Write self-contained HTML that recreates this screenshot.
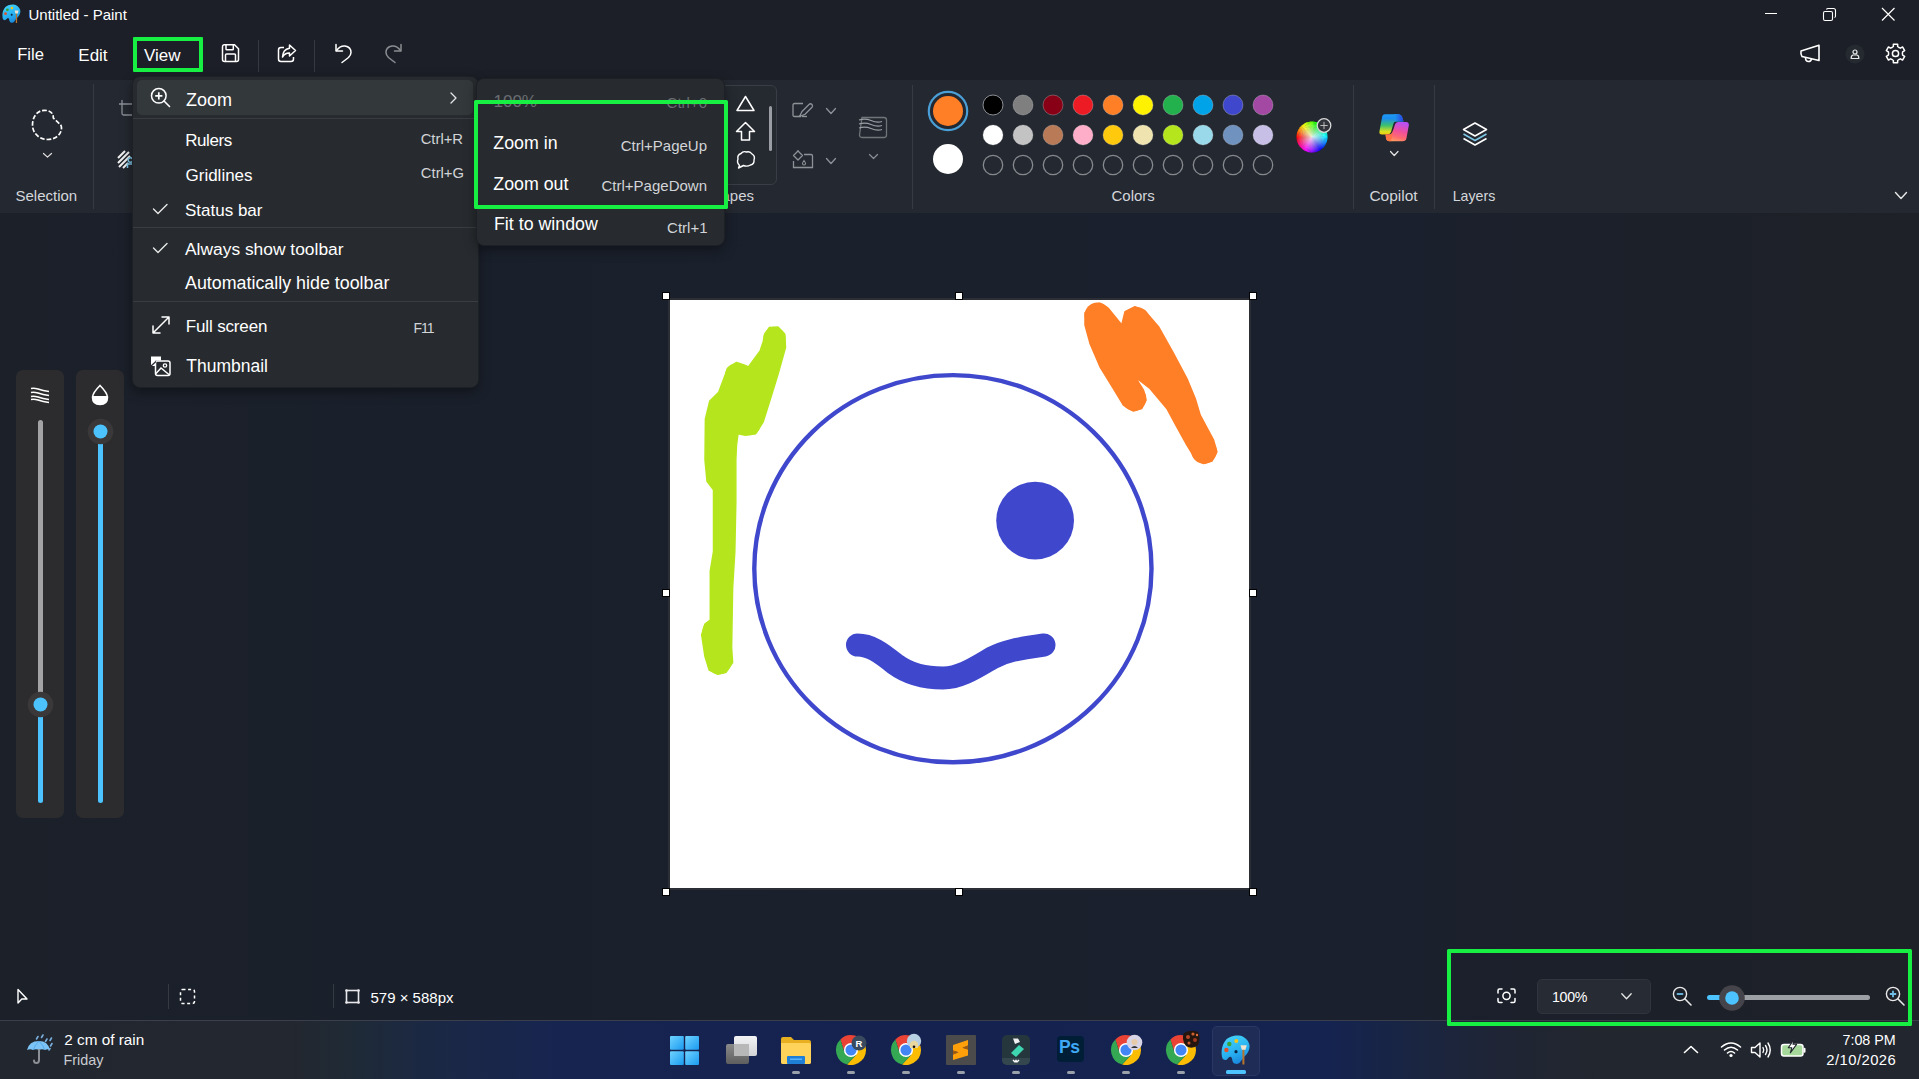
<!DOCTYPE html>
<html><head><meta charset="utf-8">
<style>
*{margin:0;padding:0;box-sizing:border-box}
html,body{width:1919px;height:1079px;overflow:hidden;background:#1b1f29;font-family:"Liberation Sans",sans-serif;color:#fff}
.a{position:absolute}
.t{position:absolute;white-space:nowrap;line-height:1}
svg{position:absolute;overflow:visible}
</style></head><body>
<div class="a" style="left:0px;top:0px;width:1919px;height:80px;background:#1c1f27;"></div>
<div class="a" style="left:0px;top:80px;width:1919px;height:133px;background:#242830;"></div>
<div class="a" style="left:0px;top:213px;width:1919px;height:807px;background:linear-gradient(90deg,#1b2029 0px,#1a202b 400px,#1a202c 900px,#1a202d 1400px,#1c2029 1650px,#1e2127 1919px);"></div>
<svg style="left:-4.7px;top:-2.6px" width="25.7" height="25.7" viewBox="0 0 40 40"><defs><linearGradient id="pgt" x1="0.2" y1="0" x2="0.6" y2="1"><stop offset="0" stop-color="#45d4fa"/><stop offset="0.6" stop-color="#28b0f0"/><stop offset="1" stop-color="#1a86dc"/></linearGradient></defs>
<path d="M15.9 15.9 C18 13.5 24 11.2 28.9 11.6 C33.5 12 38 15.5 39.3 20.2 C40.2 24 38.5 28.5 35.7 31.3 C33.5 33.5 31.5 36.5 29.9 38.6 C28.5 40.3 24.5 40.8 22.9 38 C22 36.5 22.6 34.3 21 33 C19.5 32 18 34.5 16.9 35.5 C15 37 12.5 35.5 12 33 C11.2 29 11.5 24.5 13 20.8 C13.8 18.8 14.7 17.2 15.9 15.9 Z" fill="url(#pgt)"/>
<circle cx="26.3" cy="17.1" r="2" fill="#f5c518"/><circle cx="19.3" cy="20" r="2.2" fill="#3aa335"/><circle cx="16.4" cy="26" r="2.2" fill="#e0502a"/><circle cx="26" cy="27.7" r="1.6" fill="#0b2545"/>
<rect x="32.4" y="25.5" width="2" height="15" fill="#b8742c"/><path d="M30.5 21.2 L36.8 21.2 L35.5 25.8 L31.8 25.8 Z" fill="#efe2cf"/></svg>
<div class="t" style="top:7.25px;font-size:15px;color:#ffffff;left:28.5px;">Untitled - Paint</div>
<div class="a" style="left:1765px;top:13px;width:12px;height:1px;background:#ffffff;"></div>
<svg style="left:1822px;top:7px;" width="15" height="15" viewBox="0 0 15 15"><rect x="1.5" y="4.5" width="9" height="9" rx="1.5" fill="none" stroke="#fff" stroke-width="1.1"/><path d="M4.5 2.5 Q4.8 1.5 6 1.5 L11.5 1.5 Q13.5 1.5 13.5 3.5 L13.5 9 Q13.5 10.2 12.5 10.5" fill="none" stroke="#fff" stroke-width="1.1"/></svg>
<svg style="left:1881px;top:7px;" width="15" height="15" viewBox="0 0 15 15"><path d="M1 1 L13.5 13.5 M13.5 1 L1 13.5" stroke="#fff" stroke-width="1.2"/></svg>
<div class="t" style="top:46.89px;font-size:16.6px;color:#ffffff;left:17.2px;">File</div>
<div class="t" style="top:46.75px;font-size:17px;color:#ffffff;left:78.3px;">Edit</div>
<div class="t" style="top:47.05px;font-size:17px;color:#ffffff;left:144px;">View</div>
<svg style="left:220px;top:43px;" width="21" height="21" viewBox="0 0 21 21"><path d="M2.5 4 Q2.5 1.8 4.5 1.8 L14.5 1.8 L18.5 5.8 L18.5 16.5 Q18.5 18.5 16.5 18.5 L4.5 18.5 Q2.5 18.5 2.5 16.5 Z" fill="none" stroke="#fff" stroke-width="1.5"/><path d="M6 2 L6 6 Q6 6.8 6.8 6.8 L12.5 6.8 Q13.3 6.8 13.3 6 L13.3 2" fill="none" stroke="#fff" stroke-width="1.5"/><path d="M5.5 18.3 L5.5 12 Q5.5 11 6.5 11 L14.5 11 Q15.5 11 15.5 12 L15.5 18.3" fill="none" stroke="#fff" stroke-width="1.5"/></svg>
<div class="a" style="left:258px;top:40px;width:1px;height:32px;background:#353943;"></div>
<svg style="left:276px;top:43px;" width="22" height="21" viewBox="0 0 22 21"><path d="M8 4.5 L5 4.5 Q2.5 4.5 2.5 7 L2.5 16 Q2.5 18.5 5 18.5 L15 18.5 Q17.5 18.5 17.5 16 L17.5 14" fill="none" stroke="#fff" stroke-width="1.5"/><path d="M13.5 2 L19.5 7.5 L13.5 13 L13.5 10 Q9 9.8 6.5 14 Q6.8 6.5 13.5 5.2 Z" fill="none" stroke="#fff" stroke-width="1.5" stroke-linejoin="round"/></svg>
<div class="a" style="left:314px;top:40px;width:1px;height:32px;background:#353943;"></div>
<svg style="left:333px;top:42px;" width="22" height="22" viewBox="0 0 22 22"><path d="M3 2.5 L3 9 L9.5 9" fill="none" stroke="#fff" stroke-width="1.5" stroke-linecap="round" stroke-linejoin="round"/><path d="M3.5 8.5 Q7 3.5 12 4 Q18 5 18 10.5 Q18 13 15.5 15.5 L9 20.5" fill="none" stroke="#fff" stroke-width="1.5" stroke-linecap="round"/></svg>
<svg style="left:382px;top:42px;" width="22" height="22" viewBox="0 0 22 22"><path d="M19 2.5 L19 9 L12.5 9" fill="none" stroke="#8a8d93" stroke-width="1.5" stroke-linecap="round" stroke-linejoin="round"/><path d="M18.5 8.5 Q15 3.5 10 4 Q4 5 4 10.5 Q4 13 6.5 15.5 L13 20.5" fill="none" stroke="#8a8d93" stroke-width="1.5" stroke-linecap="round"/></svg>
<svg style="left:1799px;top:44px;" width="23" height="20" viewBox="0 0 23 20"><path d="M2 7 Q1.5 10.5 3 12.5 L20 16.5 L20 1.2 Z" fill="none" stroke="#fff" stroke-width="1.6" stroke-linejoin="round"/><path d="M6.5 13.5 Q6.5 17.5 9.5 17.5 Q12 17.5 12.5 14.8" fill="none" stroke="#fff" stroke-width="1.6"/></svg>
<svg style="left:1845px;top:44px;" width="20" height="20" viewBox="0 0 20 20"><circle cx="10" cy="10" r="9.5" fill="#252a31"/><circle cx="10" cy="8" r="2" fill="none" stroke="#e8e8e8" stroke-width="1.2"/><path d="M6.2 14.5 Q6 11.5 8 11 L12 11 Q14 11.5 13.8 14.5 Z" fill="none" stroke="#e8e8e8" stroke-width="1.2"/></svg>
<svg style="left:1884.6px;top:42.6px;" width="21" height="21" viewBox="0 0 21 21"><path d="M7.05 4.52 L8.37 3.52 L8.34 1.15 L12.66 1.15 L12.63 3.52 L13.95 4.52 L15.48 5.16 L17.52 3.95 L19.68 7.69 L17.61 8.86 L17.40 10.50 L17.61 12.14 L19.68 13.31 L17.52 17.05 L15.48 15.84 L13.95 16.48 L12.63 17.48 L12.66 19.85 L8.34 19.85 L8.37 17.48 L7.05 16.48 L5.52 15.84 L3.48 17.05 L1.32 13.31 L3.39 12.14 L3.60 10.50 L3.39 8.86 L1.32 7.69 L3.48 3.95 L5.52 5.16 Z" fill="none" stroke="#fff" stroke-width="1.5" stroke-linejoin="round"/><circle cx="10.5" cy="10.5" r="3.1" fill="none" stroke="#fff" stroke-width="1.5"/></svg>
<svg style="left:25px;top:102px;" width="45" height="45" viewBox="0 0 45 45"><path d="M28.3 16 C28.5 11 25 8.3 19.5 8.3 C12 8.3 7.5 15 7.5 23 C7.5 31 14 37.5 22.5 37.5 C31 37.5 36.5 32 36.5 26 C36.5 24.5 36 23 35 22.2 Z" fill="none" stroke="#fff" stroke-width="1.7" stroke-dasharray="4.6 1.9" stroke-dashoffset="2"/></svg>
<svg style="left:42.5px;top:152.8px;" width="9" height="4.6" viewBox="0 0 9 4.6"><path d="M0.5 0.5 L4.5 4.1 L8.5 0.5" fill="none" stroke="#e0e0e0" stroke-width="1.2" stroke-linecap="round" stroke-linejoin="round"/></svg>
<div class="t" style="top:188.25px;font-size:15px;color:#d3d6db;left:15.5px;">Selection</div>
<div class="a" style="left:93px;top:84px;width:1px;height:125px;background:#363a42;"></div>
<svg style="left:118px;top:99px;" width="16" height="18" viewBox="0 0 16 18"><path d="M4 1 L4 14.5 Q4 16 5.5 16 L16 16 M1 5 L16 5" fill="none" stroke="#8c9096" stroke-width="1.3"/></svg>
<svg style="left:116px;top:149px;" width="18" height="21" viewBox="0 0 18 21"><path d="M2 9 L9 2 M2 14 L13 3 M3 18 L14 7 M7 19 L12 14" stroke="#f0f0f0" stroke-width="2"/><circle cx="14.5" cy="11" r="2.3" fill="none" stroke="#7ec8e8" stroke-width="1.5"/><path d="M11.5 19 L11.5 15 L17 15" fill="none" stroke="#7ec8e8" stroke-width="1.5"/></svg>
<div class="a" style="left:600px;top:85px;width:177px;height:100px;border:1px solid #393d45;border-radius:6px;background:#252a31"></div>
<svg style="left:736px;top:95px;" width="19" height="17" viewBox="0 0 19 17"><path d="M9.5 1.5 L18 15.5 L1 15.5 Z" fill="none" stroke="#fff" stroke-width="1.5" stroke-linejoin="round"/></svg>
<svg style="left:735px;top:121px;" width="21" height="21" viewBox="0 0 21 21"><path d="M10.5 1.5 L19.5 10.5 L14.5 10.5 L14.5 19 L6.5 19 L6.5 10.5 L1.5 10.5 Z" fill="none" stroke="#fff" stroke-width="1.5" stroke-linejoin="round"/></svg>
<svg style="left:736px;top:150px;" width="20" height="20" viewBox="0 0 20 20"><path d="M3.5 15.5 Q0.5 12.5 2 9 Q1 5 5 3.5 Q7 0.8 10.5 2 Q14 0.8 16 4 Q19.5 6 18 10 Q18.5 14 14.5 15 Q11 17 7.5 15.5 L2.5 18 Z" fill="none" stroke="#fff" stroke-width="1.4" stroke-linejoin="round"/></svg>
<div class="a" style="left:768.5px;top:106px;width:3px;height:45px;background:#9a9ea4;border-radius:2px;"></div>
<div class="t" style="top:188.25px;font-size:15px;color:#d3d6db;right:1165px;">Shapes</div>
<svg style="left:792px;top:102px;" width="22" height="17" viewBox="0 0 22 17"><path d="M9 14.5 L2.5 14.5 Q1 14.5 1 13 L1 3 Q1 1.5 2.5 1.5 L11 1.5" fill="none" stroke="#8e9298" stroke-width="1.3"/><path d="M7.5 14.5 L10 9.5 L17 2.5 Q18.5 1 20 2.5 Q21.2 4 20 5.3 L13 12.3 Z" fill="none" stroke="#8e9298" stroke-width="1.3" stroke-linejoin="round"/><path d="M10 14.5 L15 14.5" stroke="#8e9298" stroke-width="1.3"/></svg>
<svg style="left:826px;top:107.5px;" width="10" height="6" viewBox="0 0 10 6"><path d="M0.5 0.5 L5.0 5.5 L9.5 0.5" fill="none" stroke="#8e9298" stroke-width="1.3" stroke-linecap="round" stroke-linejoin="round"/></svg>
<svg style="left:792px;top:149px;" width="22" height="20" viewBox="0 0 22 20"><path d="M12 5.5 L19 5.5 Q20.5 5.5 20.5 7 L20.5 18.5 L1.5 18.5 L1.5 12" fill="none" stroke="#8e9298" stroke-width="1.3"/><path d="M6 2 L10.5 6.5 L6 11 L1.5 6.5 Z M6 1 L6 3" fill="none" stroke="#8e9298" stroke-width="1.3" stroke-linejoin="round"/><path d="M12 11.5 Q10.5 13.5 10.5 14.5 Q10.5 16 12 16 Q13.5 16 13.5 14.5 Q13.5 13.5 12 11.5 Z" fill="none" stroke="#8e9298" stroke-width="1.1"/></svg>
<svg style="left:826px;top:157.5px;" width="10" height="6" viewBox="0 0 10 6"><path d="M0.5 0.5 L5.0 5.5 L9.5 0.5" fill="none" stroke="#8e9298" stroke-width="1.3" stroke-linecap="round" stroke-linejoin="round"/></svg>
<svg style="left:857px;top:114px;" width="32" height="26" viewBox="0 0 32 26"><path d="M5 3.5 L27 3.5 Q29.5 3.5 29.5 6 L29.5 21 Q29.5 23.5 27 23.5 L5 23.5 Q2.5 23.5 2.5 21 Z" fill="none" stroke="#6f737a" stroke-width="1.3"/><path d="M2 6 Q8 4 14 6.5 Q20 9 25 7.5 M2 10 Q8 8 14 10.5 Q20 13 25 11.5 M2 14 Q8 12 14 14.5 Q20 17 25 15.5" fill="none" stroke="#9a9ea4" stroke-width="1.3"/></svg>
<svg style="left:868.5px;top:154px;" width="9" height="5" viewBox="0 0 9 5"><path d="M0.5 0.5 L4.5 4.5 L8.5 0.5" fill="none" stroke="#8a8e94" stroke-width="1.2" stroke-linecap="round" stroke-linejoin="round"/></svg>
<div class="a" style="left:912px;top:85px;width:1px;height:124px;background:#363a42;"></div>
<svg style="left:927px;top:90px;" width="42" height="42" viewBox="0 0 42 42"><circle cx="21" cy="21" r="19.2" fill="none" stroke="#4a9fd6" stroke-width="2.2"/><circle cx="21" cy="21" r="15" fill="#ff7f27"/></svg>
<svg style="left:932px;top:143px;" width="32" height="32" viewBox="0 0 32 32"><circle cx="16" cy="16" r="15" fill="#ffffff"/></svg>
<svg style="left:982px;top:94px;" width="22" height="22" viewBox="0 0 22 22"><circle cx="11" cy="11" r="10" fill="#000000" stroke="#8a8d92" stroke-width="1"/></svg>
<svg style="left:982px;top:124px;" width="22" height="22" viewBox="0 0 22 22"><circle cx="11" cy="11" r="10" fill="#ffffff" stroke="rgba(255,255,255,0.2)" stroke-width="1"/></svg>
<svg style="left:982px;top:154px;" width="22" height="22" viewBox="0 0 22 22"><circle cx="11" cy="11" r="9.7" fill="none" stroke="#85888d" stroke-width="1.3"/></svg>
<svg style="left:1012px;top:94px;" width="22" height="22" viewBox="0 0 22 22"><circle cx="11" cy="11" r="10" fill="#7f7f7f" stroke="rgba(255,255,255,0.25)" stroke-width="1"/></svg>
<svg style="left:1012px;top:124px;" width="22" height="22" viewBox="0 0 22 22"><circle cx="11" cy="11" r="10" fill="#c3c3c3" stroke="rgba(255,255,255,0.2)" stroke-width="1"/></svg>
<svg style="left:1012px;top:154px;" width="22" height="22" viewBox="0 0 22 22"><circle cx="11" cy="11" r="9.7" fill="none" stroke="#85888d" stroke-width="1.3"/></svg>
<svg style="left:1042px;top:94px;" width="22" height="22" viewBox="0 0 22 22"><circle cx="11" cy="11" r="10" fill="#880015" stroke="rgba(255,255,255,0.25)" stroke-width="1"/></svg>
<svg style="left:1042px;top:124px;" width="22" height="22" viewBox="0 0 22 22"><circle cx="11" cy="11" r="10" fill="#b97a57" stroke="rgba(255,255,255,0.2)" stroke-width="1"/></svg>
<svg style="left:1042px;top:154px;" width="22" height="22" viewBox="0 0 22 22"><circle cx="11" cy="11" r="9.7" fill="none" stroke="#85888d" stroke-width="1.3"/></svg>
<svg style="left:1072px;top:94px;" width="22" height="22" viewBox="0 0 22 22"><circle cx="11" cy="11" r="10" fill="#ed1c24" stroke="rgba(255,255,255,0.25)" stroke-width="1"/></svg>
<svg style="left:1072px;top:124px;" width="22" height="22" viewBox="0 0 22 22"><circle cx="11" cy="11" r="10" fill="#ffaec9" stroke="rgba(255,255,255,0.2)" stroke-width="1"/></svg>
<svg style="left:1072px;top:154px;" width="22" height="22" viewBox="0 0 22 22"><circle cx="11" cy="11" r="9.7" fill="none" stroke="#85888d" stroke-width="1.3"/></svg>
<svg style="left:1102px;top:94px;" width="22" height="22" viewBox="0 0 22 22"><circle cx="11" cy="11" r="10" fill="#ff7f27" stroke="rgba(255,255,255,0.25)" stroke-width="1"/></svg>
<svg style="left:1102px;top:124px;" width="22" height="22" viewBox="0 0 22 22"><circle cx="11" cy="11" r="10" fill="#ffc90e" stroke="rgba(255,255,255,0.2)" stroke-width="1"/></svg>
<svg style="left:1102px;top:154px;" width="22" height="22" viewBox="0 0 22 22"><circle cx="11" cy="11" r="9.7" fill="none" stroke="#85888d" stroke-width="1.3"/></svg>
<svg style="left:1132px;top:94px;" width="22" height="22" viewBox="0 0 22 22"><circle cx="11" cy="11" r="10" fill="#fff200" stroke="rgba(255,255,255,0.25)" stroke-width="1"/></svg>
<svg style="left:1132px;top:124px;" width="22" height="22" viewBox="0 0 22 22"><circle cx="11" cy="11" r="10" fill="#efe4b0" stroke="rgba(255,255,255,0.2)" stroke-width="1"/></svg>
<svg style="left:1132px;top:154px;" width="22" height="22" viewBox="0 0 22 22"><circle cx="11" cy="11" r="9.7" fill="none" stroke="#85888d" stroke-width="1.3"/></svg>
<svg style="left:1162px;top:94px;" width="22" height="22" viewBox="0 0 22 22"><circle cx="11" cy="11" r="10" fill="#22b14c" stroke="rgba(255,255,255,0.25)" stroke-width="1"/></svg>
<svg style="left:1162px;top:124px;" width="22" height="22" viewBox="0 0 22 22"><circle cx="11" cy="11" r="10" fill="#b5e61d" stroke="rgba(255,255,255,0.2)" stroke-width="1"/></svg>
<svg style="left:1162px;top:154px;" width="22" height="22" viewBox="0 0 22 22"><circle cx="11" cy="11" r="9.7" fill="none" stroke="#85888d" stroke-width="1.3"/></svg>
<svg style="left:1192px;top:94px;" width="22" height="22" viewBox="0 0 22 22"><circle cx="11" cy="11" r="10" fill="#00a2e8" stroke="rgba(255,255,255,0.25)" stroke-width="1"/></svg>
<svg style="left:1192px;top:124px;" width="22" height="22" viewBox="0 0 22 22"><circle cx="11" cy="11" r="10" fill="#99d9ea" stroke="rgba(255,255,255,0.2)" stroke-width="1"/></svg>
<svg style="left:1192px;top:154px;" width="22" height="22" viewBox="0 0 22 22"><circle cx="11" cy="11" r="9.7" fill="none" stroke="#85888d" stroke-width="1.3"/></svg>
<svg style="left:1222px;top:94px;" width="22" height="22" viewBox="0 0 22 22"><circle cx="11" cy="11" r="10" fill="#3f48cc" stroke="rgba(255,255,255,0.25)" stroke-width="1"/></svg>
<svg style="left:1222px;top:124px;" width="22" height="22" viewBox="0 0 22 22"><circle cx="11" cy="11" r="10" fill="#7092be" stroke="rgba(255,255,255,0.2)" stroke-width="1"/></svg>
<svg style="left:1222px;top:154px;" width="22" height="22" viewBox="0 0 22 22"><circle cx="11" cy="11" r="9.7" fill="none" stroke="#85888d" stroke-width="1.3"/></svg>
<svg style="left:1252px;top:94px;" width="22" height="22" viewBox="0 0 22 22"><circle cx="11" cy="11" r="10" fill="#a349a4" stroke="rgba(255,255,255,0.25)" stroke-width="1"/></svg>
<svg style="left:1252px;top:124px;" width="22" height="22" viewBox="0 0 22 22"><circle cx="11" cy="11" r="10" fill="#c8bfe7" stroke="rgba(255,255,255,0.2)" stroke-width="1"/></svg>
<svg style="left:1252px;top:154px;" width="22" height="22" viewBox="0 0 22 22"><circle cx="11" cy="11" r="9.7" fill="none" stroke="#85888d" stroke-width="1.3"/></svg>
<svg style="left:1296px;top:120px;" width="34" height="34" viewBox="0 0 34 34"><defs><radialGradient id="wh" cx="0.5" cy="0.5" r="0.5"><stop offset="0" stop-color="#fff"/><stop offset="1" stop-color="#fff" stop-opacity="0"/></radialGradient></defs>
<path d="M16 17 L16.00 1.50 A15.5 15.5 0 0 1 17.57 1.58 Z" fill="#4aff00"/><path d="M16 17 L17.35 1.56 A15.5 15.5 0 0 1 18.90 1.77 Z" fill="#36ff00"/><path d="M16 17 L18.69 1.74 A15.5 15.5 0 0 1 20.22 2.09 Z" fill="#21ff00"/><path d="M16 17 L20.01 2.03 A15.5 15.5 0 0 1 21.50 2.51 Z" fill="#0dff00"/><path d="M16 17 L21.30 2.43 A15.5 15.5 0 0 1 22.75 3.05 Z" fill="#00ff07"/><path d="M16 17 L22.55 2.95 A15.5 15.5 0 0 1 23.94 3.69 Z" fill="#00ff1b"/><path d="M16 17 L23.75 3.58 A15.5 15.5 0 0 1 25.07 4.43 Z" fill="#00ff30"/><path d="M16 17 L24.89 4.30 A15.5 15.5 0 0 1 26.13 5.27 Z" fill="#00ff44"/><path d="M16 17 L25.96 5.13 A15.5 15.5 0 0 1 27.11 6.19 Z" fill="#00ff58"/><path d="M16 17 L26.96 6.04 A15.5 15.5 0 0 1 28.01 7.20 Z" fill="#00ff6d"/><path d="M16 17 L27.87 7.04 A15.5 15.5 0 0 1 28.82 8.29 Z" fill="#00ff81"/><path d="M16 17 L28.70 8.11 A15.5 15.5 0 0 1 29.53 9.44 Z" fill="#00ff96"/><path d="M16 17 L29.42 9.25 A15.5 15.5 0 0 1 30.14 10.65 Z" fill="#00ffaa"/><path d="M16 17 L30.05 10.45 A15.5 15.5 0 0 1 30.64 11.90 Z" fill="#00ffbf"/><path d="M16 17 L30.57 11.70 A15.5 15.5 0 0 1 31.03 13.20 Z" fill="#00ffd3"/><path d="M16 17 L30.97 12.99 A15.5 15.5 0 0 1 31.30 14.52 Z" fill="#00ffe8"/><path d="M16 17 L31.26 14.31 A15.5 15.5 0 0 1 31.46 15.86 Z" fill="#00fffc"/><path d="M16 17 L31.44 15.65 A15.5 15.5 0 0 1 31.50 17.22 Z" fill="#00ecff"/><path d="M16 17 L31.50 17.00 A15.5 15.5 0 0 1 31.42 18.57 Z" fill="#00d8ff"/><path d="M16 17 L31.44 18.35 A15.5 15.5 0 0 1 31.23 19.90 Z" fill="#00c3ff"/><path d="M16 17 L31.26 19.69 A15.5 15.5 0 0 1 30.91 21.22 Z" fill="#00afff"/><path d="M16 17 L30.97 21.01 A15.5 15.5 0 0 1 30.49 22.50 Z" fill="#009bff"/><path d="M16 17 L30.57 22.30 A15.5 15.5 0 0 1 29.95 23.75 Z" fill="#0086ff"/><path d="M16 17 L30.05 23.55 A15.5 15.5 0 0 1 29.31 24.94 Z" fill="#0072ff"/><path d="M16 17 L29.42 24.75 A15.5 15.5 0 0 1 28.57 26.07 Z" fill="#005dff"/><path d="M16 17 L28.70 25.89 A15.5 15.5 0 0 1 27.73 27.13 Z" fill="#0049ff"/><path d="M16 17 L27.87 26.96 A15.5 15.5 0 0 1 26.81 28.11 Z" fill="#0034ff"/><path d="M16 17 L26.96 27.96 A15.5 15.5 0 0 1 25.80 29.01 Z" fill="#0020ff"/><path d="M16 17 L25.96 28.87 A15.5 15.5 0 0 1 24.71 29.82 Z" fill="#000bff"/><path d="M16 17 L24.89 29.70 A15.5 15.5 0 0 1 23.56 30.53 Z" fill="#0800ff"/><path d="M16 17 L23.75 30.42 A15.5 15.5 0 0 1 22.35 31.14 Z" fill="#1d00ff"/><path d="M16 17 L22.55 31.05 A15.5 15.5 0 0 1 21.10 31.64 Z" fill="#3100ff"/><path d="M16 17 L21.30 31.57 A15.5 15.5 0 0 1 19.80 32.03 Z" fill="#4600ff"/><path d="M16 17 L20.01 31.97 A15.5 15.5 0 0 1 18.48 32.30 Z" fill="#5a00ff"/><path d="M16 17 L18.69 32.26 A15.5 15.5 0 0 1 17.14 32.46 Z" fill="#6e00ff"/><path d="M16 17 L17.35 32.44 A15.5 15.5 0 0 1 15.78 32.50 Z" fill="#8300ff"/><path d="M16 17 L16.00 32.50 A15.5 15.5 0 0 1 14.43 32.42 Z" fill="#9700ff"/><path d="M16 17 L14.65 32.44 A15.5 15.5 0 0 1 13.10 32.23 Z" fill="#ac00ff"/><path d="M16 17 L13.31 32.26 A15.5 15.5 0 0 1 11.78 31.91 Z" fill="#c000ff"/><path d="M16 17 L11.99 31.97 A15.5 15.5 0 0 1 10.50 31.49 Z" fill="#d500ff"/><path d="M16 17 L10.70 31.57 A15.5 15.5 0 0 1 9.25 30.95 Z" fill="#e900ff"/><path d="M16 17 L9.45 31.05 A15.5 15.5 0 0 1 8.06 30.31 Z" fill="#fe00ff"/><path d="M16 17 L8.25 30.42 A15.5 15.5 0 0 1 6.93 29.57 Z" fill="#ff00eb"/><path d="M16 17 L7.11 29.70 A15.5 15.5 0 0 1 5.87 28.73 Z" fill="#ff00d6"/><path d="M16 17 L6.04 28.87 A15.5 15.5 0 0 1 4.89 27.81 Z" fill="#ff00c2"/><path d="M16 17 L5.04 27.96 A15.5 15.5 0 0 1 3.99 26.80 Z" fill="#ff00ad"/><path d="M16 17 L4.13 26.96 A15.5 15.5 0 0 1 3.18 25.71 Z" fill="#ff0099"/><path d="M16 17 L3.30 25.89 A15.5 15.5 0 0 1 2.47 24.56 Z" fill="#ff0085"/><path d="M16 17 L2.58 24.75 A15.5 15.5 0 0 1 1.86 23.35 Z" fill="#ff0070"/><path d="M16 17 L1.95 23.55 A15.5 15.5 0 0 1 1.36 22.10 Z" fill="#ff005c"/><path d="M16 17 L1.43 22.30 A15.5 15.5 0 0 1 0.97 20.80 Z" fill="#ff0047"/><path d="M16 17 L1.03 21.01 A15.5 15.5 0 0 1 0.70 19.48 Z" fill="#ff0033"/><path d="M16 17 L0.74 19.69 A15.5 15.5 0 0 1 0.54 18.14 Z" fill="#ff001e"/><path d="M16 17 L0.56 18.35 A15.5 15.5 0 0 1 0.50 16.78 Z" fill="#ff000a"/><path d="M16 17 L0.50 17.00 A15.5 15.5 0 0 1 0.58 15.43 Z" fill="#ff0b00"/><path d="M16 17 L0.56 15.65 A15.5 15.5 0 0 1 0.77 14.10 Z" fill="#ff2300"/><path d="M16 17 L0.74 14.31 A15.5 15.5 0 0 1 1.09 12.78 Z" fill="#ff3b00"/><path d="M16 17 L1.03 12.99 A15.5 15.5 0 0 1 1.51 11.50 Z" fill="#ff5200"/><path d="M16 17 L1.43 11.70 A15.5 15.5 0 0 1 2.05 10.25 Z" fill="#ff6a00"/><path d="M16 17 L1.95 10.45 A15.5 15.5 0 0 1 2.69 9.06 Z" fill="#ff8100"/><path d="M16 17 L2.58 9.25 A15.5 15.5 0 0 1 3.43 7.93 Z" fill="#ff9900"/><path d="M16 17 L3.30 8.11 A15.5 15.5 0 0 1 4.27 6.87 Z" fill="#ffb100"/><path d="M16 17 L4.13 7.04 A15.5 15.5 0 0 1 5.19 5.89 Z" fill="#ffc800"/><path d="M16 17 L5.04 6.04 A15.5 15.5 0 0 1 6.20 4.99 Z" fill="#ffe000"/><path d="M16 17 L6.04 5.13 A15.5 15.5 0 0 1 7.29 4.18 Z" fill="#fff700"/><path d="M16 17 L7.11 4.30 A15.5 15.5 0 0 1 8.44 3.47 Z" fill="#eeff00"/><path d="M16 17 L8.25 3.58 A15.5 15.5 0 0 1 9.65 2.86 Z" fill="#d6ff00"/><path d="M16 17 L9.45 2.95 A15.5 15.5 0 0 1 10.90 2.36 Z" fill="#bfff00"/><path d="M16 17 L10.70 2.43 A15.5 15.5 0 0 1 12.20 1.97 Z" fill="#a7ff00"/><path d="M16 17 L11.99 2.03 A15.5 15.5 0 0 1 13.52 1.70 Z" fill="#90ff00"/><path d="M16 17 L13.31 1.74 A15.5 15.5 0 0 1 14.86 1.54 Z" fill="#78ff00"/><path d="M16 17 L14.65 1.56 A15.5 15.5 0 0 1 16.22 1.50 Z" fill="#60ff00"/>
<circle cx="16" cy="17" r="15.5" fill="url(#wh)" opacity="0.85"/>
<circle cx="28" cy="5.5" r="6.8" fill="#30333a" stroke="#d8d8d8" stroke-width="1.3"/><path d="M28 1.8 L28 9.2 M24.3 5.5 L31.7 5.5" stroke="#c8c8c8" stroke-width="0.9"/></svg>
<div class="t" style="top:188.25px;font-size:15px;color:#d3d6db;left:1111.5px;">Colors</div>
<div class="a" style="left:1353px;top:85px;width:1px;height:124px;background:#363a42;"></div>
<svg style="left:1374px;top:108px;" width="40" height="40" viewBox="0 0 40 40"><defs>
<linearGradient id="cp1" x1="0" y1="0" x2="0" y2="1"><stop offset="0" stop-color="#1e9cf5"/><stop offset="0.2" stop-color="#1a8cf0"/><stop offset="0.55" stop-color="#3cc070"/><stop offset="0.85" stop-color="#d8e020"/><stop offset="1" stop-color="#f0d010"/></linearGradient>
<linearGradient id="cp2" x1="0.6" y1="0" x2="0.3" y2="1"><stop offset="0" stop-color="#b850f5"/><stop offset="0.45" stop-color="#f0509a"/><stop offset="0.75" stop-color="#ff6a70"/><stop offset="1" stop-color="#ffa060"/></linearGradient>
<linearGradient id="cp3" x1="0" y1="0" x2="1" y2="0"><stop offset="0" stop-color="#1a9cf0"/><stop offset="1" stop-color="#2a40e0"/></linearGradient></defs>
<path d="M11 6.3 L24 6.3 Q27.5 6.3 28.5 10 L29.5 13.5 L22 13.5 Q20 13.5 19.5 15.5 L17 24 Q16 26.5 13 26.5 L8 26.5 Q4.8 26.5 5.5 23 L8 9.5 Q8.5 6.3 11 6.3 Z" fill="url(#cp1)"/>
<path d="M20 6.3 L24 6.3 Q27.5 6.3 28.5 10 L29.5 13.5 L21 13.5 Z" fill="url(#cp3)"/>
<path d="M24 14 L32 14 Q35.3 14 34.8 17.5 L32.5 30 Q32 33.3 28.5 33.3 L15.5 33.3 Q12.5 33.3 12 30 L11.5 26.5 L15 26.5 Q17.5 26.5 18.5 24 L21 16.5 Q21.8 14 24 14 Z" fill="url(#cp2)"/>
<path d="M11.5 26.5 L15 26.5 Q17.5 26.5 18.5 24 L19.5 21 L17 33.3 L15.5 33.3 Q12.5 33.3 12 30 Z" fill="#ff7040" opacity="0.85"/></svg>
<svg style="left:1389.5px;top:150.5px;" width="8.5" height="5" viewBox="0 0 8.5 5"><path d="M0.5 0.5 L4.25 4.5 L8.0 0.5" fill="none" stroke="#e6e6e6" stroke-width="1.2" stroke-linecap="round" stroke-linejoin="round"/></svg>
<div class="t" style="top:187.82px;font-size:15.5px;color:#d3d6db;left:1393.5px;transform:translateX(-50%);">Copilot</div>
<div class="a" style="left:1434px;top:85px;width:1px;height:124px;background:#363a42;"></div>
<svg style="left:1461px;top:121px;" width="28" height="28" viewBox="0 0 28 28"><path d="M14 2 L25.5 8.5 L14 15 L2.5 8.5 Z" fill="none" stroke="#fff" stroke-width="1.6" stroke-linejoin="round"/><path d="M2.5 13 L14 19.5 L25.5 13" fill="none" stroke="#7ec6e4" stroke-width="1.6" stroke-linejoin="round"/><path d="M2.5 17.5 L14 24 L25.5 17.5" fill="none" stroke="#fff" stroke-width="1.6" stroke-linejoin="round"/></svg>
<div class="t" style="top:188.93px;font-size:14.2px;color:#d3d6db;left:1474px;transform:translateX(-50%);">Layers</div>
<svg style="left:1895px;top:191.8px;" width="12" height="7" viewBox="0 0 12 7"><path d="M0.5 0.5 L6.0 6.5 L11.5 0.5" fill="none" stroke="#e6e6e6" stroke-width="1.4" stroke-linecap="round" stroke-linejoin="round"/></svg>
<div class="a" style="left:16px;top:370px;width:48px;height:448px;background:#2c2c2e;border-radius:7px;"></div>
<div class="a" style="left:76px;top:370px;width:48px;height:448px;background:#2c2c2e;border-radius:7px;"></div>
<svg style="left:29px;top:386px;" width="22" height="18" viewBox="0 0 22 18"><path d="M2 2.5 Q5 1.8 9 3 Q14 4.8 20 5.5 M2 6.5 Q5 5.8 9 7 Q14 8.8 20 9.5 M2 10.5 Q5 9.8 9 11 Q14 12.8 20 13.5 M2 13.5 Q5 12.8 9 14 Q14 15.8 20 16.5" fill="none" stroke="#fff" stroke-width="1.6"/></svg>
<svg style="left:91px;top:384px;" width="18" height="22" viewBox="0 0 18 22"><path d="M9 1.5 Q2 8.5 1.5 13 Q1.5 20.5 9 20.5 Q16.5 20.5 16.5 13 Q16 8.5 9 1.5 Z" fill="none" stroke="#fff" stroke-width="1.6"/><path d="M1.6 12 L16.4 12 Q16.5 13 16.5 13 Q16.5 20.5 9 20.5 Q1.5 20.5 1.5 13 Z" fill="#fff"/></svg>
<div class="a" style="left:38px;top:420px;width:5px;height:283px;background:#a3a3a5;border-radius:2.5px;"></div>
<div class="a" style="left:38px;top:704px;width:5px;height:99px;background:#4cc2ff;border-radius:2.5px;"></div>
<svg style="left:27px;top:691px;" width="27" height="27" viewBox="0 0 27 27"><circle cx="13.5" cy="13.5" r="12.8" fill="#3a3839"/><circle cx="13.5" cy="13.5" r="7" fill="#4cc2ff"/></svg>
<div class="a" style="left:97.5px;top:431px;width:5px;height:372px;background:#4cc2ff;border-radius:2.5px;"></div>
<svg style="left:86.5px;top:417.5px;" width="27" height="27" viewBox="0 0 27 27"><circle cx="13.5" cy="13.5" r="12.8" fill="#3a3839"/><circle cx="13.5" cy="13.5" r="7" fill="#4cc2ff"/></svg>
<div class="a" style="left:668px;top:298px;width:583px;height:592px;background:#2b2e35;"></div>
<div class="a" style="left:670px;top:300px;width:579px;height:588px;background:#ffffff;"></div>
<div class="a" style="left:662px;top:292px;width:8px;height:8px;background:#ffffff;border:1.5px solid #000;"></div>
<div class="a" style="left:955px;top:292px;width:8px;height:8px;background:#ffffff;border:1.5px solid #000;"></div>
<div class="a" style="left:1248.5px;top:292px;width:8px;height:8px;background:#ffffff;border:1.5px solid #000;"></div>
<div class="a" style="left:662px;top:589px;width:8px;height:8px;background:#ffffff;border:1.5px solid #000;"></div>
<div class="a" style="left:1248.5px;top:589px;width:8px;height:8px;background:#ffffff;border:1.5px solid #000;"></div>
<div class="a" style="left:662px;top:887.5px;width:8px;height:8px;background:#ffffff;border:1.5px solid #000;"></div>
<div class="a" style="left:955px;top:887.5px;width:8px;height:8px;background:#ffffff;border:1.5px solid #000;"></div>
<div class="a" style="left:1248.5px;top:887.5px;width:8px;height:8px;background:#ffffff;border:1.5px solid #000;"></div>
<svg style="left:0px;top:0px;pointer-events:none;" width="1919" height="1079" viewBox="0 0 1919 1079"><path d="M764.7 334.3 L769.2 327.6 L778.0 326.9 L784.8 334.3 L785.5 347.6 L778.0 374.3 L770.7 398.1 L763.2 421.8 L755.8 433.7 L745.4 435.2 L738.0 433.7 L736.5 445.0 L735.8 460.0 L735.8 502.6 L734.8 551.7 L732.6 588.0 L731.6 647.6 L732.6 662.6 L726.2 672.2 L717.7 674.3 L709.2 670.0 L704.9 656.2 L701.7 634.8 L704.9 624.2 L710.3 620.0 L710.3 570.9 L713.5 551.7 L713.5 489.9 L707.0 481.3 L705.0 460.0 L705.4 418.9 L709.8 401.0 L718.7 392.2 L727.6 368.4 L736.5 362.5 L745.4 365.4 L748.4 367.0 L760.3 350.6 L763.2 341.7 Z" fill="#b5e61d" stroke="#b5e61d" stroke-width="1.5" stroke-linejoin="round"/>
<path d="M1085.0 313.0 L1091.7 305.0 L1100.0 303.3 L1108.4 308.4 L1121.8 325.0 L1125.0 311.7 L1135.0 306.7 L1145.0 310.9 L1158.5 326.7 L1173.5 353.4 L1186.9 378.5 L1195.2 398.5 L1200.2 415.2 L1213.6 440.2 L1216.9 452.0 L1211.9 461.1 L1203.6 463.6 L1195.2 458.6 L1186.9 445.2 L1176.8 426.9 L1166.8 408.5 L1150.0 388.5 L1135.1 376.8 L1143.5 390.2 L1146.0 400.2 L1141.8 408.5 L1133.4 411.0 L1123.4 405.2 L1113.4 388.5 L1100.0 366.8 L1090.0 343.4 L1085.0 325.0 Z" fill="#ff7f27" stroke="#ff7f27" stroke-width="1.5" stroke-linejoin="round"/>
<g fill="#b5e61d"><circle cx="774.4" cy="338.5" r="11.2"/><circle cx="749.5" cy="424" r="11.2"/><circle cx="737" cy="375" r="12"/><circle cx="719" cy="662" r="12.2"/><circle cx="713.5" cy="631" r="11"/></g>
<g fill="#ff7f27"><circle cx="1097.5" cy="315.5" r="13"/><circle cx="1134" cy="398.5" r="12.3"/><circle cx="1136.5" cy="320" r="13"/><circle cx="1204" cy="451" r="12.8"/></g>
<ellipse cx="952.9" cy="568.7" rx="198.6" ry="193.6" fill="none" stroke="#3f48cc" stroke-width="4.4"/>
<circle cx="1035.1" cy="520.6" r="38.9" fill="#3f48cc"/>
<path d="M857.5 645 C870 645, 880 652, 895 664 C910 675, 925 678, 943 678 C960 678, 975 668, 992 658 C1005 651, 1017 649, 1044 645" fill="none" stroke="#3f48cc" stroke-width="23" stroke-linecap="round" stroke-linejoin="round"/></svg>
<svg style="left:16px;top:988px;" width="13" height="17" viewBox="0 0 13 17"><path d="M2 1.5 L2 15 L5.8 11 L11 11 Z" fill="none" stroke="#fff" stroke-width="1.4" stroke-linejoin="round"/></svg>
<div class="a" style="left:168px;top:984px;width:1px;height:25px;background:#363a42;"></div>
<svg style="left:179px;top:988px;" width="17" height="17" viewBox="0 0 17 17"><rect x="1.5" y="1.5" width="14" height="14" rx="2" fill="none" stroke="#fff" stroke-width="1.5" stroke-dasharray="3 2.6"/></svg>
<div class="a" style="left:333px;top:984px;width:1px;height:24px;background:#363a42;"></div>
<svg style="left:344px;top:988px;" width="17" height="17" viewBox="0 0 17 17"><rect x="2.5" y="2.5" width="12" height="12" fill="none" stroke="#e8e8ec" stroke-width="1.6"/><circle cx="2.5" cy="2.5" r="1.3" fill="#e8e8ec"/><circle cx="14.5" cy="2.5" r="1.3" fill="#e8e8ec"/><circle cx="2.5" cy="14.5" r="1.3" fill="#e8e8ec"/><circle cx="14.5" cy="14.5" r="1.3" fill="#e8e8ec"/></svg>
<div class="t" style="top:990.25px;font-size:15px;color:#ffffff;left:370.5px;">579 × 588px</div>
<svg style="left:1497px;top:988px;" width="20" height="16" viewBox="0 0 20 16"><path d="M1 5 L1 2.5 Q1 1 2.5 1 L5 1 M14 1 L16.5 1 Q18 1 18 2.5 L18 5 M18 10.5 L18 13 Q18 14.5 16.5 14.5 L14 14.5 M5 14.5 L2.5 14.5 Q1 14.5 1 13 L1 10.5" fill="none" stroke="#fff" stroke-width="1.5" stroke-linecap="round"/><circle cx="9.5" cy="7.8" r="3.6" fill="none" stroke="#fff" stroke-width="1.5"/></svg>
<div class="a" style="left:1537px;top:979px;width:114px;height:35px;background:#272b33;border:1px solid #30343c;border-radius:5px"></div>
<div class="t" style="top:989.93px;font-size:14.2px;color:#ffffff;letter-spacing:-0.3px;left:1552px;">100%</div>
<svg style="left:1620.5px;top:993px;" width="11" height="7" viewBox="0 0 11 7"><path d="M0.8 0.8 L5.5 5.8 L10.2 0.8" fill="none" stroke="#e8e8e8" stroke-width="1.3" stroke-linecap="round" stroke-linejoin="round"/></svg>
<svg style="left:1672px;top:986px;" width="21" height="21" viewBox="0 0 21 21"><circle cx="8" cy="8" r="6.6" fill="none" stroke="#e8e8e8" stroke-width="1.4"/><path d="M12.8 12.8 L19 19" stroke="#e8e8e8" stroke-width="1.6" stroke-linecap="round"/><path d="M4.8 8 L11.2 8" stroke="#6fbfe8" stroke-width="1.8"/></svg>
<div class="a" style="left:1707px;top:995px;width:30px;height:5px;background:#4cc2ff;border-radius:2.5px;"></div>
<div class="a" style="left:1736px;top:995px;width:134px;height:5px;background:#9c9fa4;border-radius:2.5px;"></div>
<svg style="left:1718.5px;top:985px;" width="26" height="26" viewBox="0 0 26 26"><circle cx="13" cy="13" r="12.8" fill="#45444a"/><circle cx="13" cy="13" r="6.8" fill="#4cc2ff"/></svg>
<svg style="left:1885px;top:986px;" width="21" height="21" viewBox="0 0 21 21"><circle cx="8" cy="8" r="6.6" fill="none" stroke="#e8e8e8" stroke-width="1.4"/><path d="M12.8 12.8 L19 19" stroke="#e8e8e8" stroke-width="1.6" stroke-linecap="round"/><path d="M4.8 8 L11.2 8 M8 4.8 L8 11.2" stroke="#6fbfe8" stroke-width="1.8"/></svg>
<div class="a" style="left:0;top:1020px;width:1919px;height:59px;background:linear-gradient(90deg,#22262e 0px,#23272f 290px,#1f2a36 350px,#1b2844 430px,#172450 560px,#152250 900px,#152350 1330px,#1a2540 1420px,#1f2535 1500px,#22262e 1600px,#22262e 1919px)"></div>
<div class="a" style="left:0px;top:1020px;width:1919px;height:1px;background:#3a3f4b;"></div>
<svg style="left:24px;top:1033px;" width="34" height="32" viewBox="0 0 34 32"><path d="M3 17 Q5 8 15 8 Q24 8 26 17 Q23.5 15.5 21 17 Q18 15.5 15 17 Q12 15.5 9 17 Q6 15.5 3 17 Z" fill="#7cc4f5"/><path d="M15 8 Q11 12 9 17 M15 8 Q19 12 21 17" stroke="#4aa3e8" stroke-width="0.8" fill="none"/><path d="M15 17 L15 27 Q15 30 12.5 30 Q10 30 10 27.5" fill="none" stroke="#8c9096" stroke-width="2" stroke-linecap="round"/><path d="M14 3.5 L12.5 6 M19 2 L17.5 4.5 M23 6 L21.5 8.5 M27.5 5 L26 7.5 M28 10.5 L26.5 13 M26 15.5 L25 17" stroke="#7ab0e0" stroke-width="1.6" stroke-linecap="round"/></svg>
<div class="t" style="top:1031.99px;font-size:15.3px;color:#ffffff;left:64.3px;">2 cm of rain</div>
<div class="t" style="top:1052.76px;font-size:14.4px;color:#c9ccd1;left:63.5px;">Friday</div>
<svg style="left:669px;top:1035px;" width="31" height="31" viewBox="0 0 31 31"><defs><linearGradient id="wl" x1="0" y1="0" x2="1" y2="1"><stop offset="0" stop-color="#6fd3ff"/><stop offset="1" stop-color="#1a9af0"/></linearGradient></defs><rect x="1" y="1" width="13.8" height="13.8" rx="1" fill="url(#wl)"/><rect x="16.2" y="1" width="13.8" height="13.8" rx="1" fill="url(#wl)"/><rect x="1" y="16.2" width="13.8" height="13.8" rx="1" fill="url(#wl)"/><rect x="16.2" y="16.2" width="13.8" height="13.8" rx="1" fill="url(#wl)"/></svg>
<div class="a" style="left:726px;top:1044px;width:23px;height:19.5px;background:linear-gradient(180deg,#8a8a8a,#5e5e5e);border-radius:2px;"></div>
<div class="a" style="left:733.5px;top:1036px;width:23px;height:20px;background:linear-gradient(180deg,#ffffff,#dcdcdc);border-radius:2px;opacity:0.95;"></div>
<div class="a" style="left:733.5px;top:1044px;width:15.5px;height:12px;background:#b8b8b8;"></div>
<svg style="left:780px;top:1036px;" width="32" height="29" viewBox="0 0 32 29"><path d="M1 3 Q1 1 3 1 L11 1 L14 4 L29 4 Q31 4 31 6 L31 26 Q31 28 29 28 L3 28 Q1 28 1 26 Z" fill="#e8b020"/><path d="M1 7 L29 7 Q31 7 31 9 L31 26 Q31 28 29 28 L3 28 Q1 28 1 26 Z" fill="#ffd35a"/><rect x="7" y="20" width="18" height="8" rx="1" fill="#1f7fd6"/><rect x="10" y="22.5" width="12" height="1.5" fill="#58b4ff"/></svg>
<div class="a" style="left:792px;top:1070.5px;width:8px;height:3px;background:#9aa0aa;border-radius:1.5px;"></div>
<div class="a" style="left:847px;top:1070.5px;width:8px;height:3px;background:#9aa0aa;border-radius:1.5px;"></div>
<div class="a" style="left:902px;top:1070.5px;width:8px;height:3px;background:#9aa0aa;border-radius:1.5px;"></div>
<div class="a" style="left:957px;top:1070.5px;width:8px;height:3px;background:#9aa0aa;border-radius:1.5px;"></div>
<div class="a" style="left:1012px;top:1070.5px;width:8px;height:3px;background:#9aa0aa;border-radius:1.5px;"></div>
<div class="a" style="left:1067px;top:1070.5px;width:8px;height:3px;background:#9aa0aa;border-radius:1.5px;"></div>
<div class="a" style="left:1122px;top:1070.5px;width:8px;height:3px;background:#9aa0aa;border-radius:1.5px;"></div>
<div class="a" style="left:1177px;top:1070.5px;width:8px;height:3px;background:#9aa0aa;border-radius:1.5px;"></div>
<svg style="left:0px;top:0px;pointer-events:none;" width="1919" height="1079" viewBox="0 0 1919 1079"><path d="M851 1050 L844.19 1051.82 L840.39 1039.39 A15 15 0 0 1 865.49 1046.12 L852.82 1043.19 Z" fill="#ea4335"/><path d="M851 1050 L852.82 1043.19 L865.49 1046.12 A15 15 0 0 1 847.12 1064.49 L855.99 1054.99 Z" fill="#fbbc04"/><path d="M851 1050 L855.99 1054.99 L847.12 1064.49 A15 15 0 0 1 840.39 1039.39 L844.19 1051.82 Z" fill="#34a853"/><circle cx="851" cy="1050" r="7.05" fill="#fff"/><circle cx="851" cy="1050" r="5.55" fill="#4285f4"/></svg>
<svg style="left:0px;top:0px;pointer-events:none;" width="1919" height="1079" viewBox="0 0 1919 1079"><path d="M906 1050 L899.19 1051.82 L895.39 1039.39 A15 15 0 0 1 920.49 1046.12 L907.82 1043.19 Z" fill="#ea4335"/><path d="M906 1050 L907.82 1043.19 L920.49 1046.12 A15 15 0 0 1 902.12 1064.49 L910.99 1054.99 Z" fill="#fbbc04"/><path d="M906 1050 L910.99 1054.99 L902.12 1064.49 A15 15 0 0 1 895.39 1039.39 L899.19 1051.82 Z" fill="#34a853"/><circle cx="906" cy="1050" r="7.05" fill="#fff"/><circle cx="906" cy="1050" r="5.55" fill="#4285f4"/></svg>
<svg style="left:0px;top:0px;pointer-events:none;" width="1919" height="1079" viewBox="0 0 1919 1079"><path d="M1126 1050 L1119.19 1051.82 L1115.39 1039.39 A15 15 0 0 1 1140.49 1046.12 L1127.82 1043.19 Z" fill="#ea4335"/><path d="M1126 1050 L1127.82 1043.19 L1140.49 1046.12 A15 15 0 0 1 1122.12 1064.49 L1130.99 1054.99 Z" fill="#fbbc04"/><path d="M1126 1050 L1130.99 1054.99 L1122.12 1064.49 A15 15 0 0 1 1115.39 1039.39 L1119.19 1051.82 Z" fill="#34a853"/><circle cx="1126" cy="1050" r="7.05" fill="#fff"/><circle cx="1126" cy="1050" r="5.55" fill="#4285f4"/></svg>
<svg style="left:0px;top:0px;pointer-events:none;" width="1919" height="1079" viewBox="0 0 1919 1079"><path d="M1181 1050 L1174.19 1051.82 L1170.39 1039.39 A15 15 0 0 1 1195.49 1046.12 L1182.82 1043.19 Z" fill="#ea4335"/><path d="M1181 1050 L1182.82 1043.19 L1195.49 1046.12 A15 15 0 0 1 1177.12 1064.49 L1185.99 1054.99 Z" fill="#fbbc04"/><path d="M1181 1050 L1185.99 1054.99 L1177.12 1064.49 A15 15 0 0 1 1170.39 1039.39 L1174.19 1051.82 Z" fill="#34a853"/><circle cx="1181" cy="1050" r="7.05" fill="#fff"/><circle cx="1181" cy="1050" r="5.55" fill="#4285f4"/></svg>
<svg style="left:849.5px;top:1033.5px;" width="18" height="18" viewBox="0 0 18 18"><circle cx="9" cy="9" r="7.5" fill="#3a4a5e"/><text x="9" y="12.6" font-family="Liberation Sans" font-size="9.5" font-weight="700" fill="#fff" text-anchor="middle">R</text></svg>
<svg style="left:905px;top:1032px;" width="18" height="18" viewBox="0 0 18 18"><circle cx="9" cy="9" r="7.2" fill="#b8d0e4"/><path d="M5 11 Q9 6 13 11 L13 16 L5 16 Z" fill="#e9d7a0"/><circle cx="9" cy="14.8" r="1.3" fill="#111"/></svg>
<svg style="left:1126px;top:1034px;" width="17" height="17" viewBox="0 0 17 17"><circle cx="8.5" cy="8.5" r="7.8" fill="#d8d4e8"/><circle cx="8.5" cy="8" r="3" fill="#e6c9a8"/><path d="M5 14 Q8.5 10 12 14" fill="#333"/></svg>
<svg style="left:1181px;top:1029px;" width="20" height="22" viewBox="0 0 20 22"><path d="M3 4 Q10 0 17 3 Q20 9 17 16 Q11 21 5 17 Q0 10 3 4 Z" fill="#24160f"/><circle cx="7" cy="8" r="2" fill="#b8482a"/><circle cx="12" cy="5" r="1.6" fill="#d06030"/><circle cx="14" cy="11" r="2" fill="#a03a22"/><circle cx="8" cy="14" r="1.5" fill="#c85a30"/><circle cx="16" cy="6" r="1.2" fill="#e07040"/></svg>
<div class="a" style="left:946px;top:1035px;width:30px;height:29.5px;background:#4b4b4b;border-radius:1px;"></div>
<svg style="left:946px;top:1035px;" width="30" height="30" viewBox="0 0 30 30"><path d="M7 10 L22 5 L22 10.5 L16.5 12.8 L22 14.5 L22 20.5 L7 25 L7 19.5 L12.5 17.2 L7 15.5 Z" fill="#ffa00a"/><path d="M22 10.5 L16.5 12.8 L22 14.5 Z M7 15.5 L12.5 17.2 L7 19.5 Z" fill="#a05a10"/></svg>
<div class="a" style="left:1002px;top:1035px;width:28px;height:30px;background:#26363d;border-radius:5px;"></div>
<div class="a" style="left:1002px;top:1058px;width:28px;height:7px;background:#34474f;border-radius:0 0 5px 5px;"></div>
<svg style="left:1002px;top:1035px;" width="28" height="30" viewBox="0 0 28 30"><path d="M11 3.5 L16 3.5 L18 7 L13 9 Z" fill="#f0f0f0"/><path d="M17 10 L22 14 L14 22 L9 18 Z" fill="#3dd6b0"/><path d="M11 25 L13 27 L14 25.5 L15 27 L17 25" fill="none" stroke="#fff" stroke-width="1.4"/></svg>
<div class="a" style="left:1057px;top:1036px;width:27px;height:25.5px;background:#001e36;border-radius:4px;"></div>
<div class="t" style="left:1059px;top:1039px;font-size:17.5px;font-weight:700;color:#3fa9f5;letter-spacing:-0.5px">Ps</div>
<div class="a" style="left:1211.5px;top:1025.5px;width:48.5px;height:50px;background:#1f2c55;border-radius:5px;border:1px solid #2a3763;"></div>
<svg style="left:1210px;top:1024px" width="40" height="40" viewBox="0 0 40 40"><defs><linearGradient id="pgk" x1="0.2" y1="0" x2="0.6" y2="1"><stop offset="0" stop-color="#45d4fa"/><stop offset="0.6" stop-color="#28b0f0"/><stop offset="1" stop-color="#1a86dc"/></linearGradient></defs>
<path d="M15.9 15.9 C18 13.5 24 11.2 28.9 11.6 C33.5 12 38 15.5 39.3 20.2 C40.2 24 38.5 28.5 35.7 31.3 C33.5 33.5 31.5 36.5 29.9 38.6 C28.5 40.3 24.5 40.8 22.9 38 C22 36.5 22.6 34.3 21 33 C19.5 32 18 34.5 16.9 35.5 C15 37 12.5 35.5 12 33 C11.2 29 11.5 24.5 13 20.8 C13.8 18.8 14.7 17.2 15.9 15.9 Z" fill="url(#pgk)"/>
<circle cx="26.3" cy="17.1" r="2" fill="#f5c518"/><circle cx="19.3" cy="20" r="2.2" fill="#3aa335"/><circle cx="16.4" cy="26" r="2.2" fill="#e0502a"/><circle cx="26" cy="27.7" r="1.6" fill="#0b2545"/>
<rect x="32.4" y="25.5" width="2" height="15" fill="#b8742c"/><path d="M30.5 21.2 L36.8 21.2 L35.5 25.8 L31.8 25.8 Z" fill="#efe2cf"/></svg>
<div class="a" style="left:1226px;top:1070.3px;width:20px;height:3.3px;background:#4cc2ff;border-radius:1.6px;"></div>
<svg style="left:1683px;top:1045px;" width="16" height="9" viewBox="0 0 16 9"><path d="M1.5 7.5 L8 1.5 L14.5 7.5" fill="none" stroke="#fff" stroke-width="1.6" stroke-linecap="round" stroke-linejoin="round"/></svg>
<svg style="left:1720px;top:1041px;" width="22" height="17" viewBox="0 0 22 17"><path d="M1.5 6 Q11 -2 20.5 6 M4.5 9 Q11 3.5 17.5 9 M7.5 12 Q11 9 14.5 12" fill="none" stroke="#fff" stroke-width="1.6" stroke-linecap="round"/><circle cx="11" cy="14.5" r="1.6" fill="#fff"/></svg>
<svg style="left:1750px;top:1041px;" width="22" height="19" viewBox="0 0 22 19"><path d="M1.5 6.5 L5 6.5 L10 2 L10 16 L5 11.5 L1.5 11.5 Z" fill="none" stroke="#fff" stroke-width="1.4" stroke-linejoin="round"/><path d="M13 6.5 Q14.5 9 13 11.5 M15.5 4.5 Q18.5 9 15.5 13.5 M18 2 Q22.5 9 18 16" fill="none" stroke="#fff" stroke-width="1.4" stroke-linecap="round"/></svg>
<svg style="left:1780px;top:1039px;" width="27" height="19" viewBox="0 0 27 19"><rect x="1.5" y="5.5" width="21.5" height="11.5" rx="2.5" fill="#a5d89a" stroke="#fff" stroke-width="1.5"/><rect x="23.5" y="8.8" width="2" height="5" rx="1" fill="#fff"/><path d="M14.2 0.3 L8.3 8.8 L11.8 8.8 L10.3 13.8 L16.6 5.3 L13 5.3 Z" fill="#fff" stroke="#22262e" stroke-width="1.1" stroke-linejoin="round"/></svg>
<div class="t" style="top:1032.55px;font-size:14.3px;color:#ffffff;right:23.299999999999955px;">7:08 PM</div>
<div class="t" style="top:1052.72px;font-size:14.8px;color:#ffffff;letter-spacing:0.45px;right:22.799999999999955px;">2/10/2026</div>
<div class="a" style="left:132px;top:76px;width:347px;height:312px;background:#272b2f;border:1px solid #1d2024;border-radius:8px;box-shadow:0 4px 12px rgba(0,0,0,0.4)"></div>
<div class="a" style="left:137px;top:80px;width:336px;height:35px;background:#33383b;border-radius:5px;"></div>
<svg style="left:150px;top:87px;" width="22" height="22" viewBox="0 0 22 22"><circle cx="8.8" cy="8.8" r="7.3" fill="none" stroke="#fff" stroke-width="1.5"/><path d="M14 14 L19.5 19.5" stroke="#fff" stroke-width="1.6" stroke-linecap="round"/><path d="M5.2 8.8 L12.4 8.8 M8.8 5.2 L8.8 12.4" stroke="#fff" stroke-width="1.7"/></svg>
<div class="t" style="top:90.70px;font-size:18px;color:#ffffff;left:186px;">Zoom</div>
<svg style="left:450px;top:92px;" width="8" height="12" viewBox="0 0 8 12"><path d="M1 1 L6 6 L1 11" fill="none" stroke="#e6e6e6" stroke-width="1.3" stroke-linecap="round" stroke-linejoin="round"/></svg>
<div class="a" style="left:133px;top:118px;width:345px;height:1px;background:#393d41;"></div>
<div class="t" style="top:131.55px;font-size:17px;color:#ffffff;letter-spacing:-0.4px;left:185.2px;">Rulers</div>
<div class="t" style="top:131.72px;font-size:14.8px;color:#d2d4d8;right:1456px;">Ctrl+R</div>
<div class="t" style="top:166.85px;font-size:17px;color:#ffffff;left:185.5px;">Gridlines</div>
<div class="t" style="top:166.32px;font-size:14.8px;color:#d2d4d8;right:1455px;">Ctrl+G</div>
<svg style="left:151.5px;top:203px;" width="17" height="12" viewBox="0 0 17 12"><path d="M1.5 6 L6 10.5 L15 1.5" fill="none" stroke="#e8e8e8" stroke-width="1.4" stroke-linecap="round" stroke-linejoin="round"/></svg>
<div class="t" style="top:201.55px;font-size:17px;color:#ffffff;left:185px;">Status bar</div>
<div class="a" style="left:133px;top:227px;width:345px;height:1px;background:#393d41;"></div>
<svg style="left:151.5px;top:242px;" width="17" height="12" viewBox="0 0 17 12"><path d="M1.5 6 L6 10.5 L15 1.5" fill="none" stroke="#e8e8e8" stroke-width="1.4" stroke-linecap="round" stroke-linejoin="round"/></svg>
<div class="t" style="top:240.51px;font-size:17.4px;color:#ffffff;left:185px;">Always show toolbar</div>
<div class="t" style="top:274.83px;font-size:17.85px;color:#ffffff;left:185px;">Automatically hide toolbar</div>
<div class="a" style="left:133px;top:301px;width:345px;height:1px;background:#393d41;"></div>
<svg style="left:151px;top:315px;" width="20" height="20" viewBox="0 0 20 20"><path d="M2 18 L18 2 M11 2 L18 2 L18 9 M2 11 L2 18 L9 18" fill="none" stroke="#fff" stroke-width="1.5" stroke-linecap="round" stroke-linejoin="round"/></svg>
<div class="t" style="top:317.85px;font-size:17px;color:#ffffff;letter-spacing:-0.15px;left:185.8px;">Full screen</div>
<div class="t" style="top:321.30px;font-size:14px;color:#d2d4d8;letter-spacing:-1px;right:1485.5px;">F11</div>
<svg style="left:150px;top:355px;" width="22" height="22" viewBox="0 0 22 22"><rect x="5.5" y="6" width="14.5" height="14.5" rx="2" fill="none" stroke="#fff" stroke-width="1.5"/><circle cx="15" cy="10.5" r="1.7" fill="none" stroke="#fff" stroke-width="1.3"/><path d="M5.5 19 L11 13 L19.5 20" fill="none" stroke="#fff" stroke-width="1.5"/><path d="M1 1.5 L11 1.5 L11 5.5 L5.5 5.5 L5.5 11 L1 11 Z" fill="#fff"/><path d="M1 11 L6 6.5" stroke="#2b2e32" stroke-width="1.3"/></svg>
<div class="t" style="top:357.73px;font-size:17.5px;color:#ffffff;left:186.3px;">Thumbnail</div>
<div class="a" style="left:476px;top:78px;width:249px;height:168px;background:#272b2f;border:1px solid #1d2024;border-radius:8px;box-shadow:0 4px 12px rgba(0,0,0,0.4)"></div>
<div class="t" style="top:93.05px;font-size:17px;color:#6b6e73;left:493.5px;">100%</div>
<div class="t" style="top:95.25px;font-size:15px;color:#6b6e73;right:1212px;">Ctrl+0</div>
<div class="t" style="top:134.67px;font-size:17.8px;color:#ffffff;left:493.3px;">Zoom in</div>
<div class="t" style="top:138.25px;font-size:15px;color:#d2d4d8;right:1212px;">Ctrl+PageUp</div>
<div class="t" style="top:176.17px;font-size:17.8px;color:#ffffff;left:493.3px;">Zoom out</div>
<div class="t" style="top:178.25px;font-size:15px;color:#d2d4d8;right:1212px;">Ctrl+PageDown</div>
<div class="t" style="top:215.87px;font-size:17.8px;color:#ffffff;left:494px;">Fit to window</div>
<div class="t" style="top:219.75px;font-size:15px;color:#d2d4d8;right:1211.5px;">Ctrl+1</div>
<div class="a" style="left:132.5px;top:36.5px;width:70px;height:35px;border:4.3px solid #17f043;border-radius:1px"></div>
<div class="a" style="left:473.5px;top:99.5px;width:254px;height:109px;border:4.5px solid #17f043;border-radius:1.5px"></div>
<div class="a" style="left:1446.5px;top:948.5px;width:465px;height:77px;border:4.5px solid #17f043;border-radius:1.5px"></div>
</body></html>
